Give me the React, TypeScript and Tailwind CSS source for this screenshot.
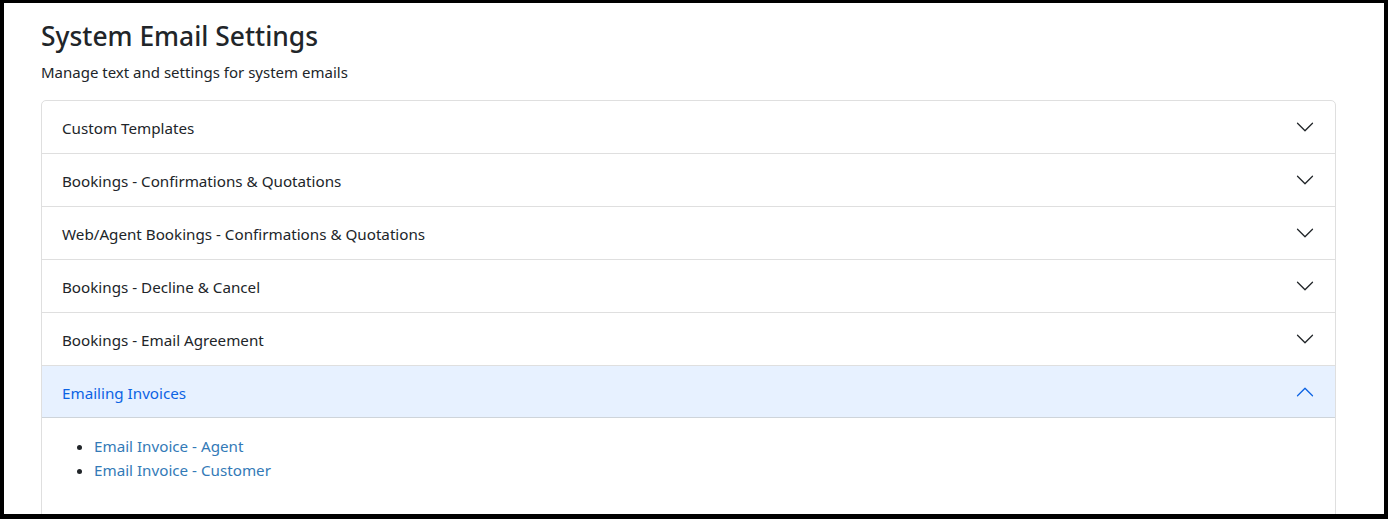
const items = [
  "Custom Templates",
  "Bookings - Confirmations & Quotations",
  "Web/Agent Bookings - Confirmations & Quotations",
  "Bookings - Decline & Cancel",
  "Bookings - Email Agreement",
];

function Chevron({ up = false, className = "" }: { up?: boolean; className?: string }) {
  return (
    <svg
      viewBox="0 0 16 16"
      width="20"
      height="20"
      fill="currentColor"
      className={`${up ? "rotate-180" : ""} ${className}`}
    >
      <path
        fillRule="evenodd"
        d="M1.646 4.646a.5.5 0 0 1 .708 0L8 10.293l5.646-5.647a.5.5 0 0 1 .708.708l-6 6a.5.5 0 0 1-.708 0l-6-6a.5.5 0 0 1 0-.708z"
      />
    </svg>
  );
}

export default function App() {
  return (
    <div className="h-[519px] w-[1388px] bg-black pt-[3px] pl-[4px] pr-[4px] pb-[5px] overflow-hidden">
      <div
        className="h-full bg-white pl-[37px] pr-[48px] pt-[15px] text-[#212529] overflow-hidden"
        style={{ fontFamily: '"Noto Sans", "Open Sans", sans-serif' }}
      >
        <h1 className="text-[26.4px] leading-[36px] font-medium">System Email Settings</h1>
        <p className="mt-[7px] text-[15px] leading-[22px]">Manage text and settings for system emails</p>

        <div className="mt-[17px] border border-[#dfdfdf] rounded-t-[5px]">
          {items.map((t) => (
            <div key={t} className="border-b border-[#dfdfdf]">
              <button className="w-full flex items-center justify-between h-[52px] pl-[20px] pr-[20px] text-[15.2px] text-left">
                <span className="pt-[2px]">{t}</span>
                <Chevron className="text-[#212529]" />
              </button>
            </div>
          ))}
          <div>
            <button className="w-full flex items-center justify-between h-[52px] pl-[20px] pr-[20px] text-[15.2px] text-left bg-[#e7f1ff] text-[#0c63e4] border-b border-[#ced4da]">
              <span className="pt-[3px]">Emailing Invoices</span>
              <Chevron up />
            </button>
            <div className="px-[20px] pt-[16px] pb-[40px]">
              <ul className="list-disc pl-[32px] text-[15.2px] leading-[24px]">
                <li>
                  <a className="text-[#337ab7]" href="#">Email Invoice - Agent</a>
                </li>
                <li>
                  <a className="text-[#337ab7]" href="#">Email Invoice - Customer</a>
                </li>
              </ul>
            </div>
          </div>
        </div>
      </div>
    </div>
  );
}
